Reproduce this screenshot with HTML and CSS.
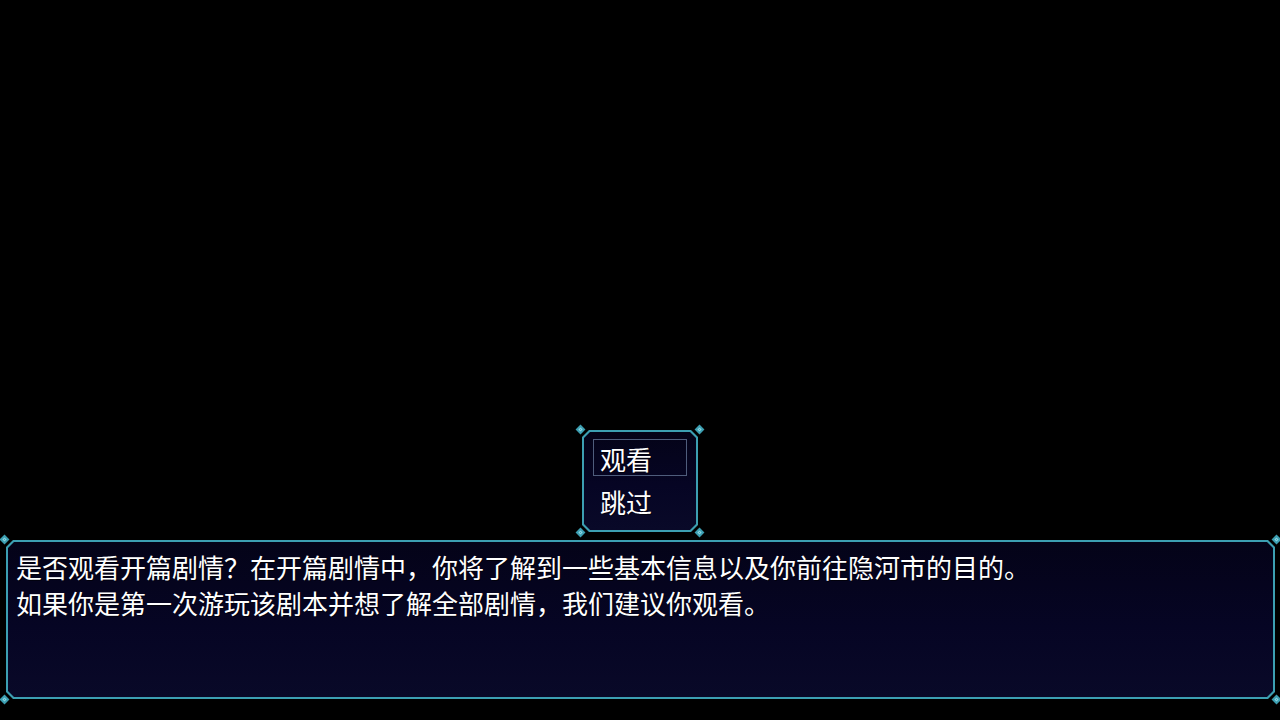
FILE: index.html
```html
<!DOCTYPE html>
<html lang="zh-CN">
<head>
<meta charset="utf-8">
<title>开篇剧情</title>
<link rel="stylesheet" href="styles.css">
</head>
<body>
<main class="stage">
  <div class="choice-row">
    <section class="win win-choice">
      <span class="gem gem-tl"></span><span class="gem gem-tr"></span>
      <span class="gem gem-bl"></span><span class="gem gem-br"></span>
      <ul class="choices">
        <li class="choice is-selected">观看</li>
        <li class="choice">跳过</li>
      </ul>
    </section>
  </div>
  <section class="win win-message">
    <span class="gem gem-tl"></span><span class="gem gem-tr"></span>
    <span class="gem gem-bl"></span><span class="gem gem-br"></span>
    <p class="message">是否观看开篇剧情？在开篇剧情中，你将了解到一些基本信息以及你前往隐河市的目的。<br>如果你是第一次游玩该剧本并想了解全部剧情，我们建议你观看。</p>
  </section>
</main>
</body>
</html>
```
FILE: styles.css
```css
* { box-sizing: border-box; }

html, body {
  margin: 0;
  padding: 0;
  background: #000;
}

.stage {
  width: 1280px;
  height: 720px;
  display: flex;
  flex-direction: column;
  justify-content: flex-end;
  padding: 0 5px 21px 6px;
  font-family: "Noto Sans CJK SC", "Noto Sans", sans-serif;
  color: #fff;
}

.choice-row {
  display: flex;
  justify-content: center;
  padding-right: 1px;
  margin-bottom: 8px;
}

/* window frame: teal chamfered edge drawn by two clipped layers */
.win {
  position: relative;
  --cut: 7px;
}
.win::before,
.win::after {
  content: "";
  position: absolute;
  z-index: 0;
  clip-path: polygon(var(--cut) 0, calc(100% - var(--cut)) 0, 100% var(--cut),
    100% calc(100% - var(--cut)), calc(100% - var(--cut)) 100%, var(--cut) 100%,
    0 calc(100% - var(--cut)), 0 var(--cut));
}
.win::before {
  inset: 0;
  background: #3c9fb2;
}
.win::after {
  inset: 2px;
  --cut: 6px;
  background: linear-gradient(180deg, #040318 0%, #060524 55%, #090928 100%);
}
.win > * { position: relative; z-index: 1; }

/* corner studs */
.win .gem {
  position: absolute;
  z-index: 2;
  width: 7px;
  height: 7px;
  background: #3c9fb2;
  transform: rotate(45deg);
  box-shadow: inset 0 0 0 2px #3c9fb2, inset 0 0 0 3px #8fd6e2;
}
.gem-tl { left: -5px; top: -4px; }
.gem-tr { right: -5px; top: -4px; }
.gem-bl { left: -5px; bottom: -4px; }
.gem-br { right: -5px; bottom: -4px; }

.win-choice {
  width: 116px;
  height: 102px;
  padding: 9px 10px 9px 11px;
}

.choices {
  list-style: none;
  margin: 0;
  padding: 0;
  width: 94px;
  display: flex;
  flex-direction: column;
  gap: 6px;
}

.choice {
  height: 37px;
  line-height: 37px;
  padding-left: 6px;
  font-size: 26px;
  border: 1px solid transparent;
  text-shadow: 1px 1px 0 rgba(0, 0, 0, 0.6);
}
.choice.is-selected {
  border-color: #4f5d7c;
}

.win-message {
  width: 100%;
  height: 159px;
  padding: 9px 10px;
}

.message {
  margin: 0;
  font-size: 26px;
  line-height: 36px;
  white-space: nowrap;
  text-shadow: 1px 1px 0 rgba(0, 0, 0, 0.6);
}
```
